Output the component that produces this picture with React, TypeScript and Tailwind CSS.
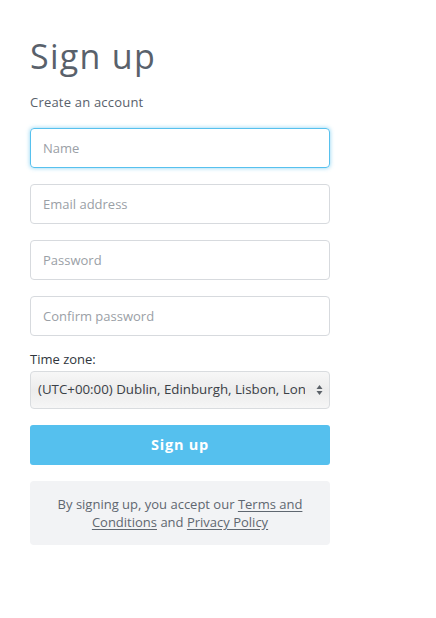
export default function App() {
  const fields = ["Email address", "Password", "Confirm password"];

  return (
    <div className="min-h-screen bg-white font-['Open_Sans',sans-serif]">
      <div className="w-[300px] ml-[30px] pt-[34px]">
        <h1 className="text-[34px] leading-[44px] tracking-[1.3px] text-[#59616b]">
          Sign up
        </h1>
        <p className="mt-[15px] text-[13px] leading-[18px] tracking-[0.2px] text-[#59616b]">
          Create an account
        </p>

        <div className="mt-[17px] flex flex-col gap-4">
          <input
            placeholder="Name"
            className="h-10 w-full rounded-[4px] border border-[#57c1ee] px-3 text-[13px] text-[#3c4248] placeholder:text-[#9aa0a6] shadow-[0_0_4px_rgba(87,193,238,0.7)] outline-none"
          />
          {fields.map((f) => (
            <input
              key={f}
              placeholder={f}
              type={f.includes("assword") ? "password" : "text"}
              className="h-10 w-full rounded-[4px] border border-[#d7dade] px-3 text-[13px] text-[#3c4248] placeholder:text-[#9aa0a6] outline-none"
            />
          ))}
        </div>

        <label className="block mt-[14px] text-[13px] leading-[18px] text-[#2f363d]">
          Time zone:
        </label>
        <div className="mt-[3px] relative h-[38px] w-full rounded-[4px] border border-[#d9dcdf] bg-gradient-to-b from-[#f7f7f7] via-[#ececec] to-[#f6f6f6] flex items-center pl-[7px] pr-6">
          <span className="text-[13.3px] text-[#3a4046] whitespace-nowrap overflow-hidden">
            (UTC+00:00) Dublin, Edinburgh, Lisbon, Lon
          </span>
          <svg
            className="absolute right-[6px] top-1/2 -translate-y-1/2"
            width="7"
            height="12"
            viewBox="0 0 7 12"
          >
            <path d="M3.5 1 L6.5 5 L0.5 5 Z" fill="#5b6168" />
            <path d="M3.5 11 L6.5 7 L0.5 7 Z" fill="#5b6168" />
          </svg>
        </div>

        <button className="mt-4 h-10 w-full rounded-[3px] bg-[#55c0ee] text-[14.5px] font-bold tracking-[0.8px] text-white">
          Sign up
        </button>

        <div className="mt-4 rounded-[4px] bg-[#f2f3f5] px-4 py-[14px] text-center text-[13px] leading-[18px] text-[#5f6770]">
          By signing up, you accept our{" "}
          <a className="underline underline-offset-2">Terms and Conditions</a> and{" "}
          <a className="underline underline-offset-2">Privacy Policy</a>
        </div>
      </div>
    </div>
  );
}
